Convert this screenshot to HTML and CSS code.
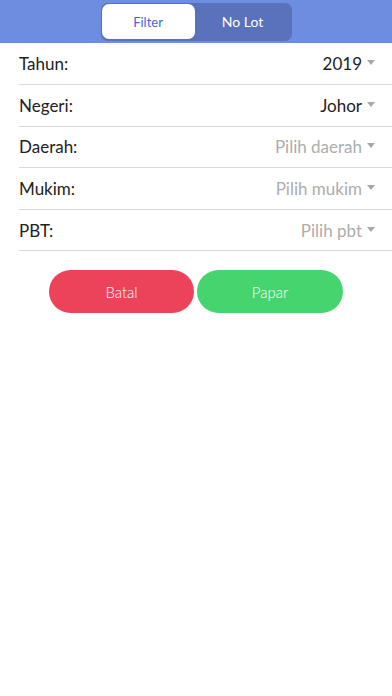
FILE: index.html
```html
<!DOCTYPE html>
<html>
<head>
<meta charset="utf-8">
<link rel="stylesheet" href="styles.css">
</head>
<body>
<header class="topbar">
  <div class="segment">
    <div class="seg-item active">Filter</div>
    <div class="seg-item">No Lot</div>
  </div>
</header>
<main class="form">
  <div class="row"><span class="label">Tahun:</span><span class="value">2019<i class="caret"></i></span></div>
  <div class="row"><span class="label">Negeri:</span><span class="value">Johor<i class="caret"></i></span></div>
  <div class="row"><span class="label">Daerah:</span><span class="value placeholder">Pilih daerah<i class="caret"></i></span></div>
  <div class="row"><span class="label">Mukim:</span><span class="value placeholder">Pilih mukim<i class="caret"></i></span></div>
  <div class="row"><span class="label">PBT:</span><span class="value placeholder">Pilih pbt<i class="caret"></i></span></div>
  <div class="actions">
    <button class="btn cancel">Batal</button>
    <button class="btn show">Papar</button>
  </div>
</main>
</body>
</html>
```
FILE: styles.css
```css
* { box-sizing: border-box; }
html, body { margin: 0; padding: 0; background: #fff; }
body { font-family: Lato, "Open Sans", sans-serif; width: 392px; height: 696px; overflow: hidden; }
.topbar {
  height: 43px;
  background: #6c8de0;
  display: flex;
  justify-content: center;
  align-items: flex-start;
  padding-top: 3px;
}
.segment {
  width: 191px;
  height: 38px;
  background: #5a72bb;
  border-radius: 7px;
  display: flex;
  padding: 1px 1px 2px 1px;
}
.seg-item {
  flex: 1;
  display: flex;
  align-items: center;
  justify-content: center;
  color: #fff;
  font-size: 14px;
  border-radius: 7px;
}
.seg-item.active {
  flex: 0 0 93px;
  background: #fff;
  color: #4468d8;
  font-size: 13px;
}
.form { padding-left: 19px; padding-top: 0.5px; }
.row {
  height: 41.6px;
  border-bottom: 1.5px solid #d9d9d9;
  display: flex;
  align-items: center;
  justify-content: space-between;
  padding-right: 17px;
  font-size: 17px;
  color: #222;
  font-weight: 400;
}
.value { display: flex; align-items: center; }
.placeholder { color: #adadad; }
.caret {
  display: inline-block;
  width: 0; height: 0;
  margin-left: 5px;
  border-left: 4.5px solid transparent;
  border-right: 4.5px solid transparent;
  border-top: 5px solid #a8a8a8;
  margin-top: -2px;
}
.actions {
  display: flex;
  justify-content: center;
  gap: 3px;
  margin-left: -19px;
  padding-top: 19px;
}
.btn {
  width: 145px;
  height: 43px;
  border: none;
  border-radius: 22px;
  color: #fff;
  font-family: Lato, "Open Sans", sans-serif;
  font-size: 15px;
  font-weight: 300;
}
.cancel { background: #ec435b; }
.show { background: #46d46e; width: 146px; }
```
